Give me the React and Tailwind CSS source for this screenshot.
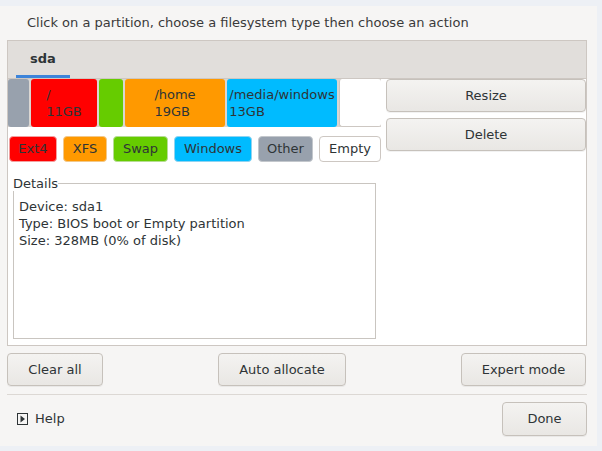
import React from 'react';

const font = { fontFamily: '"DejaVu Sans", "Noto Sans", sans-serif' };

const partitions = [
  { w: 'w-[21px]', bg: 'bg-[#98a1ad]' },
  { w: 'w-[66px]', bg: 'bg-[#ff0000]', lines: ['/', '11GB'] },
  { w: 'w-[24px]', bg: 'bg-[#66cc00]' },
  { w: 'w-[100px]', bg: 'bg-[#ff9900]', lines: ['/home', '19GB'] },
  { w: 'w-[110px]', bg: 'bg-[#00bbff]', lines: ['/media/windows', '13GB'] },
];

const legend = [
  { label: 'Ext4', w: 'w-[48px]', cls: 'bg-[#ff0000] border-[#f3a0a0]' },
  { label: 'XFS', w: 'w-[44px]', cls: 'bg-[#ff9900] border-[#f2c88a]' },
  { label: 'Swap', w: 'w-[55px]', cls: 'bg-[#66cc00] border-[#b6dc94]' },
  { label: 'Windows', w: 'w-[78px]', cls: 'bg-[#00bbff] border-[#8fd3f0]' },
  { label: 'Other', w: 'w-[55px]', cls: 'bg-[#98a1ad] border-[#c3c7cc]' },
  { label: 'Empty', w: 'w-[62px]', cls: 'bg-white border-[#cdc7c2]' },
];

const GtkButton = ({ children, className = '' }) => (
  <button
    className={`h-[33px] rounded-[4px] border border-[#c6c1bb] bg-gradient-to-b from-[#f4f3f1] to-[#e9e7e4] text-[13px] text-[#2e3436] shadow-[0_1px_0_rgba(0,0,0,0.05)] ${className}`}
  >
    {children}
  </button>
);

export default function App() {
  return (
    <div className="w-[602px] h-[451px] bg-[#edf0f5] pt-[6px] pr-[5px] pb-[5px] overflow-hidden" style={font}>
      <div className="h-full bg-[#f6f5f4] flex flex-col pl-[7px] pr-[10px] text-[#2e3436] text-[13px]">
        {/* instruction */}
        <div className="h-[34px] flex items-center pl-[20px] text-[#3a3a3a]">
          Click on a partition, choose a filesystem type then choose an action
        </div>

        {/* notebook */}
        <div className="h-[306px] border border-[#cdc7c2] flex flex-col bg-white">
          <div className="h-[38px] bg-[#e1dedb] border-b border-[#cdc7c2] flex pl-[8px]">
            <div className="w-[54px] h-full flex items-center justify-center font-bold border-b-[3px] border-[#3d84da] pt-[2px]">
              sda
            </div>
          </div>

          <div className="flex flex-1">
            {/* left column */}
            <div className="w-[373px] flex flex-col">
              <div className="h-[48px] flex gap-[2px] bg-[#dad6d2]">
                {partitions.map((p, i) => (
                  <div key={i} className={`${p.w} ${p.bg} h-full rounded-[3px] flex items-center justify-center`}>
                    {p.lines && (
                      <div className="flex flex-col leading-[17px] text-[#2e3436]">
                        {p.lines.map((l) => (
                          <span key={l}>{l}</span>
                        ))}
                      </div>
                    )}
                  </div>
                ))}
                <div className="flex-1 h-full bg-white rounded-[3px] border-l border-b border-[#cdc7c2]" />
              </div>

              <div className="flex gap-[6px] mt-[9px] ml-[1px]">
                {legend.map((b) => (
                  <div
                    key={b.label}
                    className={`${b.w} ${b.cls} h-[26px] rounded-[4px] border flex items-center justify-center text-[#2e3436]`}
                  >
                    {b.label}
                  </div>
                ))}
              </div>

              <fieldset className="ml-[5px] w-[363px] h-[163px] mt-[14px] border border-[#c9c5c0]">
                <legend className="-ml-[1px] leading-[15px] text-[#2e3436]">Details</legend>
                <div className="pl-[5px] pt-[7px] leading-[17px]">
                  <div>Device: sda1</div>
                  <div>Type: BIOS boot or Empty partition</div>
                  <div>Size: 328MB (0% of disk)</div>
                </div>
              </fieldset>
            </div>

            {/* right column */}
            <div className="w-[200px] ml-[5px] flex flex-col gap-[6px]">
              <GtkButton className="w-full">Resize</GtkButton>
              <GtkButton className="w-full">Delete</GtkButton>
            </div>
          </div>
        </div>

        {/* action buttons */}
        <div className="flex justify-between mt-[7px] pr-[1px]">
          <GtkButton className="w-[96px]">Clear all</GtkButton>
          <GtkButton className="w-[128px]">Auto allocate</GtkButton>
          <GtkButton className="w-[125px]">Expert mode</GtkButton>
        </div>

        <div className="h-px bg-[#dcd8d4] mt-[8px]" />

        <div className="flex items-center justify-between mt-[7px]">
          <div className="flex items-center gap-[7px] pl-[10px]">
            <svg width="11" height="12" viewBox="0 0 11 12">
              <rect x="0.5" y="0.5" width="10" height="11" fill="none" stroke="#2e3436" strokeWidth="1" />
              <polygon points="3.5,2.5 8,6 3.5,9.5" fill="#2e3436" />
            </svg>
            <span>Help</span>
          </div>
          <GtkButton className="w-[85px] h-[34px]">Done</GtkButton>
        </div>
      </div>
    </div>
  );
}
